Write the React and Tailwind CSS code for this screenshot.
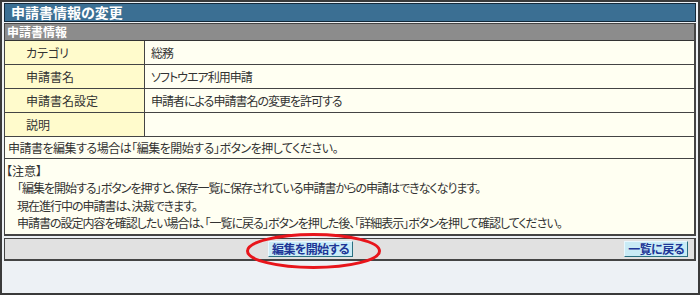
import React from 'react';

const font = { fontFamily: '"Noto Sans CJK JP", "Noto Sans", sans-serif' };

const rows = [
  { label: 'カテゴリ', value: '総務' },
  { label: '申請書名', value: 'ソフトウエア利用申請' },
  { label: '申請書名設定', value: '申請者による申請書名の変更を許可する' },
  { label: '説明', value: '' },
];

const notes = [
  '「編集を開始する」ボタンを押すと、保存一覧に保存されている申請書からの申請はできなくなります。',
  '現在進行中の申請書は、決裁できます。',
  '申請書の設定内容を確認したい場合は、「一覧に戻る」ボタンを押した後、「詳細表示」ボタンを押して確認してください。',
];

const Btn = ({ children }) => (
  <button className="h-[16px] px-[3px] bg-[#c9ebf6] border border-t-[#e8f8ff] border-l-[#e8f8ff] border-r-[#2a6f80] border-b-[#2a6f80] text-[#1d3596] text-[12px] font-bold leading-[14px] tracking-[-0.6px] [font-feature-settings:'palt']">
    {children}
  </button>
);

export default function App() {
  return (
    <div style={font} className="relative w-[700px] h-[295px] bg-[#edf1f5] border-2 border-[#3a3a3a] px-[2px] pt-[1px] text-[#333] text-[12px] [font-feature-settings:'palt']">
      <div className="h-[19px] bg-[#3b6f93] border border-[#13293a] pl-[6px] text-white font-bold text-[14px] leading-[17px]">
        申請書情報の変更
      </div>

      <div className="mt-[1px] border border-[#444] border-r-2 border-b-2 bg-[#fffff2]">
        <div className="h-[17px] bg-[#8c8c8c] border-b border-[#333] pl-[2px] text-white font-bold text-[12px] leading-[16px]">
          申請書情報
        </div>
        {rows.map((r) => (
          <div key={r.label} className="flex h-[24px] border-b border-[#444]">
            <div className="w-[140px] bg-[#fffbcc] border-r border-[#444] pl-[21px] leading-[23px]">{r.label}</div>
            <div className="flex-1 pl-[6px] leading-[23px] tracking-[-1px]">{r.value}</div>
          </div>
        ))}
        <div className="h-[22px] border-b border-[#444] pl-[3px] leading-[21px] tracking-[-0.5px]">
          申請書を編集する場合は「編集を開始する」ボタンを押してください。
        </div>
        <div className="h-[75px] pt-[3px] pl-[1px]">
          <div className="leading-[17px]">【注意】</div>
          {notes.map((n) => (
            <div key={n} className="pl-[11px] leading-[17.5px] tracking-[-1px]">{n}</div>
          ))}
        </div>
      </div>

      <div className="mt-[2px] h-[23px] bg-[#e1e1e1] border border-[#444] border-b-2 border-r-2 flex items-center justify-between pl-[263px] pr-[6px]">
        <Btn>編集を開始する</Btn>
        <Btn>一覧に戻る</Btn>
      </div>

      <svg className="absolute left-[243px] top-[230px]" width="137" height="38" viewBox="0 0 137 38">
        <ellipse cx="68.5" cy="19" rx="66" ry="16.5" fill="none" stroke="#e8151b" strokeWidth="3" />
      </svg>
    </div>
  );
}
